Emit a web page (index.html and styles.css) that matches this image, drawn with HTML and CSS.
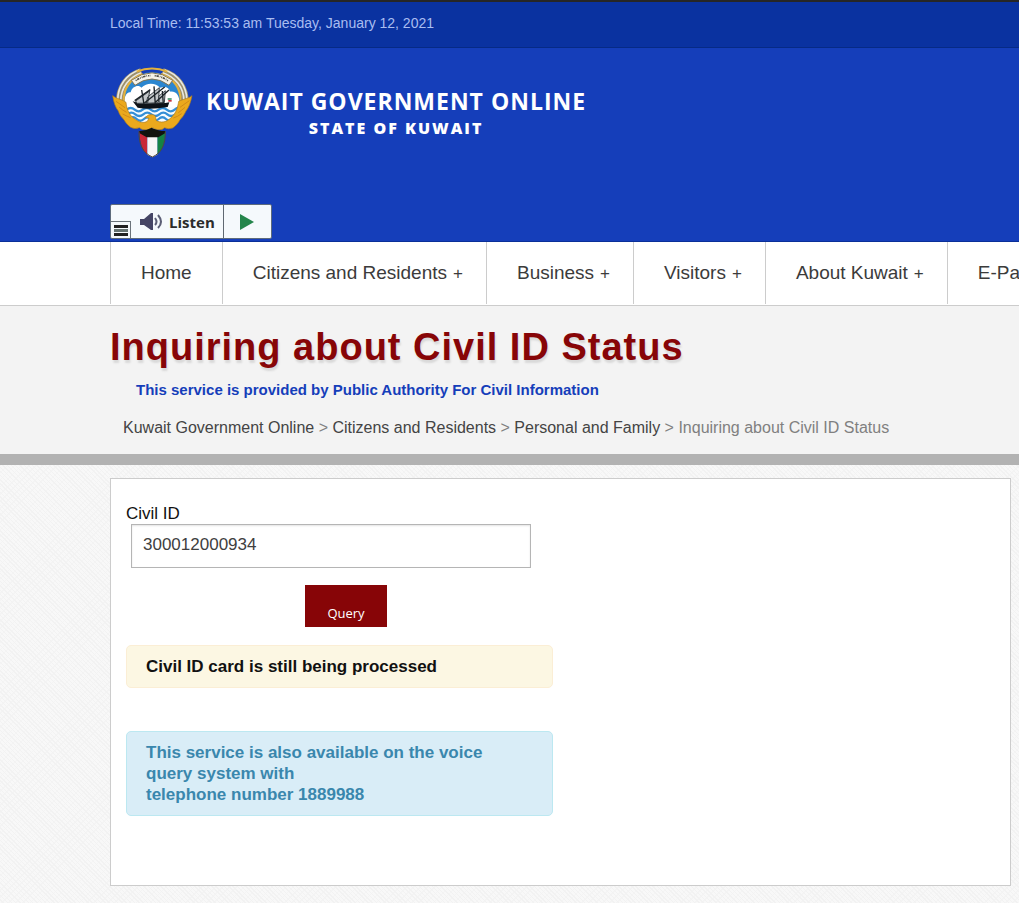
FILE: index.html
```html
<!DOCTYPE html>
<html lang="en">
<head>
<meta charset="utf-8">
<meta name="viewport" content="width=device-width, initial-scale=1">
<title>Inquiring about Civil ID Status</title>
<link rel="stylesheet" href="styles.css">
</head>
<body>
<div class="topbar">Local Time: 11:53:53 am Tuesday, January 12, 2021</div>
<header class="header">
  <a class="brand" href="#">
    <svg class="emblem" viewBox="36 33 246 276" role="img" aria-label="Emblem of Kuwait">
      <circle cx="156" cy="138" r="86" fill="#2b86d0"/>
      <path d="M76 158 C68 126 80 110 92 112 C96 92 118 88 124 98 C142 80 168 84 180 98 C196 92 208 98 210 110 C230 108 244 124 236 162 Z" fill="#fff"/>
      <path d="M76 156 H238 C238 190 205 222 156 222 C110 222 78 190 76 156Z" fill="#f8fcff"/>
      <g fill="none" stroke="#348ed6" stroke-width="7">
        <path d="M80 164 q12-10 24 0 t24 0 t24 0 t24 0 t24 0 t24 0 t12 0"/>
        <path d="M82 178 q12-10 24 0 t24 0 t24 0 t24 0 t24 0 t24 0"/>
        <path d="M88 192 q11-10 22 0 t22 0 t22 0 t22 0 t22 0 t22 0"/>
      </g>
      <path d="M98 139 L118 145 L196 144 L208 142 L203 156 Q150 165 113 158Z" fill="#0d1218"/>
      <path d="M107 138 L149 108 L143 144 L111 145Z M143 126 L178 98 L175 143 L139 145Z M176 124 L196 107 L193 143 L178 143Z" fill="#c3c7ca" stroke="#3c4348" stroke-width="3"/>
      <path d="M132 148 L125 105 M166 148 L162 94 M190 147 L187 108 M104 137 L151 104 M134 143 L194 96 M168 140 L207 105" fill="none" stroke="#1c2328" stroke-width="4"/>
      <path d="M203 130h12v4h-12z" fill="#167c46"/><path d="M205 135h10v5h-10z" fill="#c7313b"/>
      <g fill="none" stroke="#9b8f6c" stroke-width="22">
        <path d="M59 146 C56 99 82 62 124 50"/>
        <path d="M255 146 C258 99 231 62 188 50"/>
      </g>
      <g fill="none" stroke="#e9e8e0" stroke-width="5">
        <path d="M53 137 C53 91 81 57 118 45"/><path d="M261 137 C260 91 232 57 194 45"/>
        <path d="M62 138 C63 96 88 66 124 53"/><path d="M252 138 C251 96 226 66 188 53"/>
      </g>
      <g fill="none" stroke="#e3b13c" stroke-width="6">
        <path d="M71 138 C71 97 95 70 128 57"/><path d="M242 138 C242 97 218 70 183 57"/>
        <path d="M110 50 Q156 31 202 50"/>
      </g>
      <path d="M94 76 Q156 31 218 76 L207 91 Q156 53 105 91Z" fill="#f5f2e8" stroke="#847551" stroke-width="3"/>
      <path d="M107 77 Q130 62 151 62 M164 62 Q191 65 205 79" fill="none" stroke="#514f47" stroke-width="5" stroke-dasharray="3 2 7 3 2 3"/>
      <path d="M38 122 C49 132 68 133 78 142 C80 164 88 181 105 193 C118 203 131 205 142 199 L147 189 L136 188 Q144 176 158 179 Q169 180 168 196 C181 205 202 202 214 187 C229 174 233 157 236 139 C250 132 267 130 276 122 C272 143 266 158 258 168 C253 179 247 188 240 194 C235 204 228 212 218 219 Q204 224 194 218 Q180 231 157 218 Q134 231 118 218 Q104 224 92 217 C84 211 77 203 72 194 C64 187 58 178 55 168 C46 157 41 142 38 122Z" fill="#eba91d" stroke="#a97b23" stroke-width="2"/>
      <path d="M48 139 Q64 150 75 158 M57 156 Q68 166 80 172 M68 177 Q83 185 92 188 M268 137 Q251 149 240 157 M255 157 Q244 167 235 173 M245 176 Q233 185 220 189" stroke="#d18b18" stroke-width="3" fill="none"/>
      <path d="M118 228 L142 246 L142 299 Q119 281 118 228Z" fill="#c82737"/>
      <path d="M196 228 L172 246 L172 299 Q194 282 196 228Z" fill="#148344"/>
      <path d="M142 243 H172 V299 L157 307 L142 299Z" fill="#f6f6f6"/>
      <path d="M117 228 Q136 229 155 218 Q174 228 196 228 L195 235 L175 247 H140 L119 235Z" fill="#11130e"/>
      <path d="M117 229 C116 271 130 294 157 306 C184 294 197 270 196 229" fill="none" stroke="#524839" stroke-width="3"/>
    </svg>
    <span class="brand-text"><span class="brand-name">KUWAIT GOVERNMENT ONLINE</span><span class="brand-state">STATE OF KUWAIT</span></span>
  </a>
  <div class="listen">
    <button class="listen-menu" type="button" aria-label="Reader menu"><svg viewBox="0 0 14 11"><path d="M0 0h14v3H0zM0 8h14v3H0z" fill="#222"/><path d="M0 4h14v3H0z" fill="#667371"/></svg></button>
    <button class="listen-label" type="button">
      <svg class="speaker" viewBox="0 0 23 18"><path d="M0 6h4l7-6h2v17h-2l-7-5H0z" fill="#454565"/><path d="M15 5q3 4 0 7M18 2q6 7 0 13" fill="none" stroke="#5b5e75" stroke-width="2"/></svg>
      <span>Listen</span>
    </button>
    <button class="listen-play" type="button" aria-label="Play"><svg viewBox="0 0 14 16"><path d="M0 0l14 8-14 8z" fill="#24854b"/></svg></button>
  </div>
</header>
<nav class="nav">
  <a href="#">Home</a>
  <a href="#">Citizens and Residents<span class="plus">+</span></a>
  <a href="#">Business<span class="plus">+</span></a>
  <a href="#">Visitors<span class="plus">+</span></a>
  <a href="#">About Kuwait<span class="plus">+</span></a>
  <a href="#">E-Pa</a>
</nav>
<section class="intro">
  <h1>Inquiring about Civil ID Status</h1>
  <p class="provider">This service is provided by Public Authority For Civil Information</p>
  <div class="crumbs"><a href="#">Kuwait Government Online</a> &gt; <a href="#">Citizens and Residents</a> &gt; <a href="#">Personal and Family</a> &gt; Inquiring about Civil ID Status</div>
</section>
<main class="card">
  <form class="form">
    <label for="civil-id">Civil ID</label>
    <input id="civil-id" type="text" value="300012000934">
    <button class="query" type="button">Query</button>
  </form>
  <div class="alert warning">Civil ID card is still being processed</div>
  <div class="alert info">This service is also available on the voice query system with<br>telephone number 1889988</div>
</main>
</body>
</html>
```

FILE: styles.css
```css
* { box-sizing: border-box; }
body {
  margin: 0;
  font-family: "Liberation Sans", Arial, sans-serif;
  color: #111;
  background-color: #f8f8f8;
  background-image:
    repeating-linear-gradient(45deg, transparent 0 2px, #f2f2f2 2px 3px),
    repeating-linear-gradient(-45deg, transparent 0 4px, #f4f4f4 4px 5px);
}
a { color: inherit; text-decoration: none; }
button { font: inherit; border: 0; padding: 0; background: none; cursor: pointer; }
svg { display: block; }

.topbar {
  height: 48px;
  padding-left: 110px;
  border-top: 2px solid #262626;
  border-bottom: 1px solid #062a86;
  background: #0a32a0;
  color: #a9bdf0;
  font-size: 14px;
  line-height: 43px;
}
.header {
  display: flex;
  flex-direction: column;
  align-items: flex-start;
  gap: 46px;
  padding: 18px 0 2px 110px;
  background: #153eba;
  border-bottom: 1px solid #0a2f98;
}
.brand { display: flex; gap: 12px; padding-left: 2px; color: #fff; }
.emblem { width: 82px; height: 92px; }
.brand-text {
  display: flex;
  flex-direction: column;
  align-items: center;
  padding-top: 22px;
  font-family: "Open Sans", sans-serif;
  white-space: nowrap;
}
.brand-name { font-size: 23px; font-weight: 700; line-height: 27px; letter-spacing: 1px; }
.brand-state { font-size: 16px; font-weight: 800; line-height: 26px; letter-spacing: 2px; }

.listen {
  display: flex;
  align-items: stretch;
  height: 35px;
  border: 1px solid #5d6b7c;
  border-radius: 2px;
  background: #f5f9fc;
}
.listen-menu {
  align-self: flex-end;
  display: grid;
  place-items: center;
  width: 20px;
  height: 17px;
  border: 1px solid #6b737a;
  border-left: 0;
  border-bottom: 0;
}
.listen-menu svg { width: 14px; height: 11px; }
.listen-label {
  display: flex;
  align-items: center;
  gap: 6px;
  padding: 0 8px 0 9px;
  border-right: 1px solid #5f6871;
  color: #2b2b2b;
  font-family: "Open Sans", sans-serif;
  font-size: 15px;
  font-weight: 700;
}
.speaker { width: 23px; height: 18px; }
.listen-play { display: grid; place-items: center; width: 47px; }
.listen-play svg { width: 14px; height: 16px; }

.nav {
  display: flex;
  height: 64px;
  padding: 0 0 1px 110px;
  overflow: hidden;
  background: #fff;
  border-bottom: 1px solid #ccc;
}
.nav a {
  flex: none;
  padding: 0 30px;
  border-left: 1px solid #ccc;
  color: #3b3b3b;
  font-size: 19px;
  line-height: 61px;
}
.nav a:not(:first-child) { padding-right: 23px; }
.plus { margin-left: 6px; font-size: 17px; }

.intro {
  padding: 18px 8px 14px 110px;
  background: #f3f3f3;
  border-bottom: 11px solid #b2b2b2;
}
h1 {
  margin: 0;
  color: #870507;
  font-size: 38px;
  line-height: 46px;
  letter-spacing: 1px;
  text-shadow: 1px 3px 2px #d9d9d9;
}
.provider {
  margin: 10px 0 0 26px;
  color: #153eba;
  font-size: 15px;
  font-weight: 700;
  line-height: 20px;
}
.crumbs { margin: 16px 0 0 13px; color: #808080; font-size: 16px; line-height: 24px; }
.crumbs a { color: #444; }

.card {
  min-height: 408px;
  margin: 13px 8px 17px 110px;
  padding: 24px 15px;
  background: #fff;
  border: 1px solid #ccc;
}
.form { display: flex; flex-direction: column; align-items: flex-start; max-width: 440px; font-size: 17px; }
.form label { line-height: 21px; }
.form input {
  width: 400px;
  height: 44px;
  margin-left: 5px;
  padding: 0 11px 3px;
  border: 1px solid #b5b5b5;
  box-shadow: inset 0 1px 2px #e4e4e4;
  color: #404040;
  font: inherit;
}
.query {
  align-self: center;
  height: 42px;
  margin: 17px 0 18px;
  padding: 14px 22px 0;
  background: #870507;
  color: #fff;
  font-family: "Open Sans", sans-serif;
  font-size: 13px;
}
.alert {
  max-width: 427px;
  padding: 10px 19px;
  border: 1px solid;
  border-radius: 5px;
  font-size: 17px;
  font-weight: 700;
  line-height: 21px;
}
.warning { background: #fcf7e3; border-color: #fbeed5; }
.info { margin-top: 43px; background: #d9edf7; border-color: #bce8f1; color: #3a87ad; }
```
